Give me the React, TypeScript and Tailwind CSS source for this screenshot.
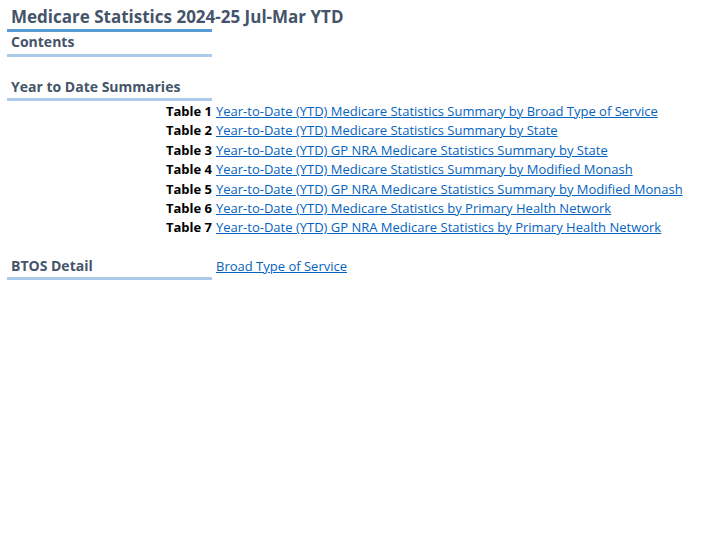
export default function App() {
  const rows = [
    "Year-to-Date (YTD) Medicare Statistics Summary by Broad Type of Service",
    "Year-to-Date (YTD) Medicare Statistics Summary by State",
    "Year-to-Date (YTD) GP NRA Medicare Statistics Summary by State",
    "Year-to-Date (YTD) Medicare Statistics Summary by Modified Monash",
    "Year-to-Date (YTD) GP NRA Medicare Statistics Summary by Modified Monash",
    "Year-to-Date (YTD) Medicare Statistics by Primary Health Network",
    "Year-to-Date (YTD) GP NRA Medicare Statistics by Primary Health Network",
  ];
  const f = { fontFamily: '"Open Sans", "Noto Sans", sans-serif' };
  return (
    <div className="w-[702px] h-[558px] bg-white pl-[7px] pt-[6px] text-[#44546A]" style={f}>
      <div className="w-[205px] h-[26px] border-b-[3px] border-[#5B9BD5] pl-[4px] whitespace-nowrap text-[17px] font-bold leading-[22px]">
        Medicare Statistics 2024-25 Jul-Mar YTD
      </div>
      <div className="w-[205px] h-[25px] border-b-[3px] border-[#ACCBEA] pl-[4px] text-[14px] font-bold leading-[19px]">
        Contents
      </div>
      <div className="h-[20px]" />
      <div className="w-[205px] h-[24px] border-b-[3px] border-[#ACCBEA] pl-[4px] text-[14px] font-bold leading-[20px]">
        Year to Date Summaries
      </div>
      <div className="flex flex-col pt-[1px]">
        {rows.map((r, i) => (
          <div key={i} className="flex h-[19.4px] items-center text-[13px] whitespace-nowrap">
            <div className="w-[205px] text-right font-bold text-black">Table {i + 1}</div>
            <a href="#" className="ml-[4px] text-[#0563C1] underline">{r}</a>
          </div>
        ))}
      </div>
      <div className="h-[18px]" />
      <div className="flex h-[24px] items-start">
        <div className="w-[205px] h-[24px] border-b-[3px] border-[#ACCBEA] pl-[4px] text-[14px] font-bold leading-[20px]">
          BTOS Detail
        </div>
        <a href="#" className="ml-[4px] text-[13px] leading-[20px] text-[#0563C1] underline">Broad Type of Service</a>
      </div>
    </div>
  );
}
